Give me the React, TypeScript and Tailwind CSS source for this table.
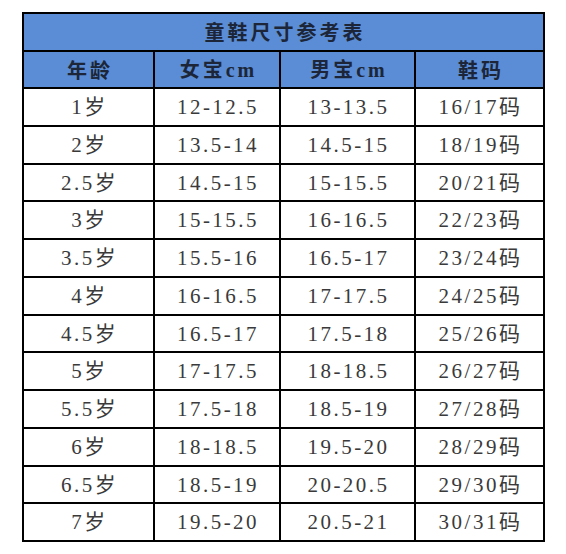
import React from "react";

const rows: [string, string, string, string][] = [
  ["1岁", "12-12.5", "13-13.5", "16/17码"],
  ["2岁", "13.5-14", "14.5-15", "18/19码"],
  ["2.5岁", "14.5-15", "15-15.5", "20/21码"],
  ["3岁", "15-15.5", "16-16.5", "22/23码"],
  ["3.5岁", "15.5-16", "16.5-17", "23/24码"],
  ["4岁", "16-16.5", "17-17.5", "24/25码"],
  ["4.5岁", "16.5-17", "17.5-18", "25/26码"],
  ["5岁", "17-17.5", "18-18.5", "26/27码"],
  ["5.5岁", "17.5-18", "18.5-19", "27/28码"],
  ["6岁", "18-18.5", "19.5-20", "28/29码"],
  ["6.5岁", "18.5-19", "20-20.5", "29/30码"],
  ["7岁", "19.5-20", "20.5-21", "30/31码"],
];

const sans = "font-['Noto_Sans_CJK_SC',sans-serif]";
const serif = "font-['Liberation_Serif','Noto_Sans_CJK_SC',serif]";

export default function App() {
  return (
    <div className="w-[566px] h-[554px] bg-white pt-[12px] pl-[22px]">
      <div className="w-[523px] border-l-2 border-t-2 border-black">
        <div className="h-[38px] bg-[#5a8dd5] border-r-2 border-b-2 border-black flex items-center justify-center">
          <span className={`${sans} font-bold text-[20px] tracking-[3px] text-[#1c2638] pl-[3px]`}>
            童鞋尺寸参考表
          </span>
        </div>
        <div className="grid grid-cols-[131px_126px_135px_129px] h-[37px]">
          {[
            <span key="a" className={`${sans}`}>年龄</span>,
            <span key="b"><span className={sans}>女宝</span><span className="font-['Liberation_Serif',serif] tracking-[3px]">cm</span></span>,
            <span key="c"><span className={sans}>男宝</span><span className="font-['Liberation_Serif',serif] tracking-[3px]">cm</span></span>,
            <span key="d" className={sans}>鞋码</span>,
          ].map((c, i) => (
            <div
              key={i}
              className="bg-[#5a8dd5] border-r-2 border-b-2 border-black flex items-center justify-center font-bold text-[20px] tracking-[3px] text-[#1c2638] pl-[3px]"
            >
              {c}
            </div>
          ))}
        </div>
        {rows.map((r, ri) => (
          <div key={ri} className="grid grid-cols-[131px_126px_135px_129px] h-[37.75px]">
            {r.map((c, ci) => (
              <div
                key={ci}
                className={`${serif} border-r-2 border-b-2 border-black flex items-center justify-center text-[21px] tracking-[2.5px] text-[#3a3a3a] pl-[2px] pt-[2px]`}
              >
                {c}
              </div>
            ))}
          </div>
        ))}
      </div>
    </div>
  );
}
